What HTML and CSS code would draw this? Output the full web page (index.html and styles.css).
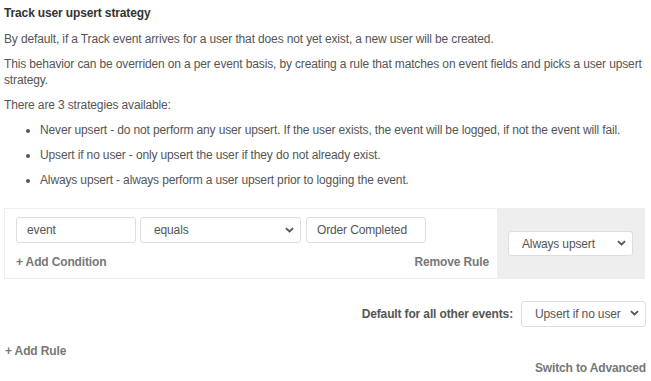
FILE: index.html
```html
<!DOCTYPE html>
<html lang="en">

<head>
    <meta charset="UTF-8">
    <meta name="viewport" content="width=device-width, initial-scale=1.0">
    <title>Track user upsert strategy</title>

    <link rel="stylesheet" href="styles.css">
</head>

<body>
    <div class="upsert-settings">
        <h4 class="upsert-title">Track user upsert strategy</h4>
        <p>By default, if a Track event arrives for a user that does not yet exist, a new user will be created.</p>
        <p>This behavior can be overriden on a per event basis, by creating a rule that matches on event fields and picks a user upsert strategy.</p>
        <p>There are 3 strategies available:</p>
        <ul class="strategy-list">
            <li>Never upsert - do not perform any user upsert. If the user exists, the event will be logged, if not the event will fail.</li>
            <li>Upsert if no user - only upsert the user if they do not already exist.</li>
            <li>Always upsert - always perform a user upsert prior to logging the event.</li>
        </ul>

        <!-- a single rule: conditions on the left, the picked strategy on the right -->
        <div class="rule">
            <div class="rule-conditions">
                <div class="condition-row">
                    <input type="text" class="field-input" value="event">
                    <div class="select-wrap operator-select">
                        <select class="field-select">
                            <option>equals</option>
                        </select>
                        <svg class="chevron" viewBox="0 0 10 6" width="9" height="6"><path d="M1 1l4 3.6L9 1" fill="none" stroke="#555" stroke-width="2"/></svg>
                    </div>
                    <input type="text" class="field-input" value="Order Completed">
                </div>
                <div class="rule-links">
                    <a class="text-link">+ Add Condition</a>
                    <a class="text-link">Remove Rule</a>
                </div>
            </div>
            <div class="rule-strategy">
                <div class="select-wrap strategy-select">
                    <select class="field-select">
                        <option>Always upsert</option>
                    </select>
                    <svg class="chevron" viewBox="0 0 10 6" width="9" height="6"><path d="M1 1l4 3.6L9 1" fill="none" stroke="#555" stroke-width="2"/></svg>
                </div>
            </div>
        </div>

        <!-- fallback strategy for anything the rules don't match -->
        <div class="default-row">
            <label class="default-label">Default for all other events:</label>
            <div class="select-wrap strategy-select">
                <select class="field-select">
                    <option>Upsert if no user</option>
                </select>
                <svg class="chevron" viewBox="0 0 10 6" width="9" height="6"><path d="M1 1l4 3.6L9 1" fill="none" stroke="#555" stroke-width="2"/></svg>
            </div>
        </div>

        <a class="text-link add-rule">+ Add Rule</a>
        <div class="advanced-row">
            <a class="text-link">Switch to Advanced</a>
        </div>
    </div>
</body>

</html>
```

FILE: styles.css
```css
/* root styles */
body, html {
    margin: 0;
    font-family: "Liberation Sans", Arial, sans-serif;
    font-size: 12px;
    line-height: 16px;
    letter-spacing: -0.14px;
    color: #555;
    background: #fff;
}

.upsert-settings {
    padding: 5px 5px 0 4px;
}

.upsert-title {
    margin: 0 0 10px;
    font-size: 12px;
    font-weight: bold;
    color: #333;
}

p {
    margin: 0 0 9px;
}

/* the list of the three strategies */
.strategy-list {
    margin: 0 0 20px;
    padding-left: 36px;
}
.strategy-list li {
    margin-bottom: 9px;
}
.strategy-list li:last-child {
    margin-bottom: 0;
}

/* the rule box */
.rule {
    display: flex;
    border: 1px solid #eee;
    margin-right: 1px;
}
.rule-conditions {
    flex: 1;
    padding: 8px 8px 8px 11px;
}
.condition-row {
    display: flex;
    gap: 4px;
}
.condition-row .field-input:last-child {
    margin-left: 1px;
}
.rule-links {
    display: flex;
    justify-content: space-between;
    margin-top: 11px;
}
.rule-strategy {
    width: 147px;
    background: #eee;
    display: flex;
    align-items: center;
    justify-content: center;
}

/* inputs and selects */
.field-input, .field-select {
    box-sizing: border-box;
    height: 26px;
    border: 1px solid #ddd;
    border-radius: 3px;
    background: #fff;
    font-family: inherit;
    font-size: 12px;
    letter-spacing: inherit;
    color: #555;
    outline: none;
}
.field-input {
    width: 120px;
    padding: 0 10px;
}
.field-select {
    width: 100%;
    appearance: none;
    -webkit-appearance: none;
    padding: 0 22px 0 13px;
}
.select-wrap {
    position: relative;
}
.select-wrap .chevron {
    position: absolute;
    right: 7px;
    top: 10px;
    pointer-events: none;
}
.operator-select {
    width: 161px;
}
.strategy-select {
    width: 125px;
}
.strategy-select .field-select {
    height: 25px;
}
.strategy-select .chevron {
    top: 9px;
}

/* default strategy row */
.default-row {
    display: flex;
    justify-content: flex-end;
    align-items: center;
    gap: 8px;
    margin-top: 22px;
}
.default-row .field-select {
    height: 26px;
}
.default-label {
    font-weight: bold;
}

/* bold grey links */
.text-link {
    font-weight: bold;
    color: #777;
    cursor: pointer;
    text-decoration: none;
}
.add-rule {
    display: block;
    margin-top: 16px;
    padding-left: 1px;
}
.advanced-row {
    text-align: right;
    margin-top: 1px;
}
```
